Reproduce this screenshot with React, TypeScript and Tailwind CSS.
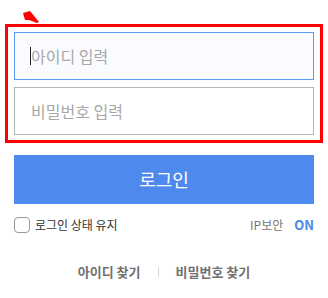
export default function App() {
  const font = { fontFamily: '"Noto Sans CJK KR", "Noto Sans", sans-serif' };
  return (
    <div className="relative w-[328px] h-[298px] bg-white overflow-hidden" style={font}>
      {/* annotation arrow */}
      <svg
        className="absolute left-0 top-0"
        width="50"
        height="30"
        viewBox="0 0 50 30"
      >
        <polygon points="23,13 30,11 39,22 37,23 29,20 25,20" fill="#ff0000" />
      </svg>

      {/* annotation box */}
      <div className="absolute left-[5px] top-[24px] w-[318px] h-[119px] border-[3px] border-[#ff0000] pointer-events-none" />

      <div className="px-[14px] pt-[32px]">
        <div className="flex flex-col gap-[7px]">
          <div className="h-[48px] border border-[#5c9bf2] bg-[#f9fbff] flex items-center pl-[15px]">
            <span className="w-px h-[18px] bg-[#222]" />
            <span className="text-[16px] text-[#a8a8a8]">아이디 입력</span>
          </div>
          <div className="h-[48px] border border-[#b7b7b7] bg-white flex items-center pl-[16px]">
            <span className="text-[16px] text-[#a8a8a8]">비밀번호 입력</span>
          </div>
        </div>

        <button className="mt-[20px] w-full h-[49px] bg-[#4e89ee] text-white text-[18px] flex items-center justify-center">
          로그인
        </button>

        <div className="mt-[13px] flex items-center justify-between h-[16px]">
          <label className="flex items-center gap-[5px]">
            <span className="w-[16px] h-[16px] rounded-[4px] border border-[#9a9a9a] bg-white" />
            <span className="text-[12px] text-[#333]">로그인 상태 유지</span>
          </label>
          <div className="flex items-center gap-[11px]">
            <span className="text-[12px] text-[#777]">IP보안</span>
            <span className="text-[13px] font-bold text-[#4a86ec]">ON</span>
          </div>
        </div>

        <div className="mt-[29px] flex items-center justify-center gap-[17px]">
          <span className="text-[13px] font-bold text-[#707070]">아이디 찾기</span>
          <span className="w-px h-[10px] bg-[#d6d6d6]" />
          <span className="text-[13px] font-bold text-[#707070]">비밀번호 찾기</span>
        </div>
      </div>
    </div>
  );
}
